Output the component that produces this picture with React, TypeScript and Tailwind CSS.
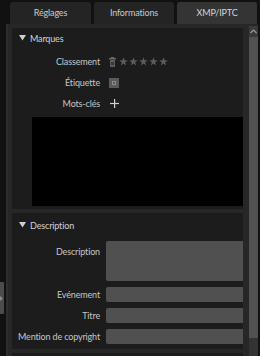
import React from "react";

const Star = () => (
  <svg width="9" height="9" viewBox="0 0 10 10" className="block">
    <polygon
      points="5,0.4 6.2,3.7 9.7,3.8 6.9,5.9 7.9,9.4 5,7.3 2.1,9.4 3.1,5.9 0.3,3.8 3.8,3.7"
      fill="#5c5c5c"
    />
  </svg>
);

const Trash = () => (
  <svg width="7" height="10" viewBox="0 0 7 10" className="block">
    <rect x="2" y="0" width="3" height="1" fill="#6a6a6a" />
    <rect x="0" y="1" width="7" height="1.5" fill="#6a6a6a" />
    <rect x="1" y="3" width="5" height="7" fill="#5c5c5c" />
    <rect x="2" y="5" width="3" height="3" fill="#3a3a3a" />
  </svg>
);

const Caret = () => (
  <svg width="7" height="6" viewBox="0 0 7 6" className="block">
    <polygon points="0,0 7,0 3.5,5.5" fill="#cfcfcf" />
  </svg>
);

function Row({ label, children, h = 21 }: { label: string; children?: React.ReactNode; h?: number }) {
  return (
    <div className="flex items-center" style={{ height: h }}>
      <div className="w-[88px] text-right text-[#c6c6c6] leading-none">{label}</div>
      <div className="ml-[9px] flex items-center">{children}</div>
    </div>
  );
}

function Field({ label, h = 15, top = false }: { label: string; h?: number; top?: boolean }) {
  return (
    <div className={`flex ${top ? "items-start" : "items-center"}`}>
      <div className={`w-[88px] text-right text-[#c6c6c6] leading-none ${top ? "pt-[6px]" : ""}`}>{label}</div>
      <div className="ml-[6px] flex-1 bg-[#505050] rounded-l-[2px]" style={{ height: h }} />
    </div>
  );
}

export default function App() {
  return (
    <div
      className="w-[260px] h-[356px] bg-[#111111] overflow-hidden relative text-[9px] tracking-[-0.15px]"
      style={{ fontFamily: 'Lato, "Noto Sans", "Liberation Sans", sans-serif' }}
    >
      <div className="flex gap-[3px] pl-[10px] pt-[2px] h-[24px]">
        <div className="w-[81px] h-[22px] bg-[#242424] rounded-t-[3px] flex items-center justify-center text-[#c9c9c9]">Réglages</div>
        <div className="w-[80px] h-[22px] bg-[#242424] rounded-t-[3px] flex items-center justify-center text-[#c9c9c9]">Informations</div>
        <div className="w-[80px] h-[22px] bg-[#343434] rounded-t-[3px] flex items-center justify-center text-[#d4d4d4]">XMP/IPTC</div>
      </div>
      <div className="flex h-[332px]">
        <div className="w-[6px] relative">
          <div className="absolute left-0 top-[258px] w-[4px] h-[32px] bg-[#4c4c4c] rounded-r-[1px] flex items-center">
            <svg width="3" height="5" viewBox="0 0 3 5" className="block">
              <polygon points="0,0 3,2.5 0,5" fill="#8a8a8a" />
            </svg>
          </div>
        </div>
        <div className="flex-1 flex border-l-2 border-[#2e2e2e] bg-[#272727]">
          <div className="flex-1 flex flex-col gap-[4px] pt-[4px] pl-[4px]">
            <div className="bg-[#1c1c1c] flex flex-col h-[181px]">
              <div className="flex items-center h-[20px] pl-[7px] gap-[4px] text-[#d2d2d2]">
                <Caret />
                <span className="leading-none">Marques</span>
              </div>
              <div className="flex flex-col pt-[3px]">
                <Row label="Classement">
                  <Trash />
                  <div className="flex gap-[1px] ml-[3px]">
                    <Star /><Star /><Star /><Star /><Star />
                  </div>
                </Row>
                <Row label="Étiquette">
                  <div className="w-[10px] h-[10px] bg-[#5a5a5a] flex items-center justify-center">
                    <div className="w-[4px] h-[4px] border border-[#8a8a8a]" />
                  </div>
                </Row>
                <Row label="Mots-clés" h={20}>
                  <svg width="9" height="9" viewBox="0 0 9 9" className="block ml-[1px]">
                    <rect x="4" y="0" width="1.2" height="9" fill="#cfcfcf" />
                    <rect x="0" y="3.9" width="9" height="1.2" fill="#cfcfcf" />
                  </svg>
                </Row>
              </div>
              <div className="ml-[20px] mt-[4px] h-[89px] bg-black" />
            </div>
            <div className="bg-[#1c1c1c] flex flex-col h-[136px]">
              <div className="flex items-center h-[24px] pl-[7px] gap-[4px] text-[#d2d2d2]">
                <Caret />
                <span className="leading-none">Description</span>
              </div>
              <div className="flex flex-col gap-[6px] mt-[4px]">
                <Field label="Description" h={40} top />
                <Field label="Evénement" />
                <Field label="Titre" />
                <Field label="Mention de copyright" />
              </div>
            </div>
            <div className="bg-[#1c1c1c] flex-1" />
          </div>
          <div className="w-[6px]" />
          <div className="w-[9px] flex flex-col pt-[2px]">
            <div className="h-[11px] bg-[#3a3a3a] flex items-center justify-center">
              <svg width="7" height="5" viewBox="0 0 7 5" className="block">
                <polyline points="0.5,4 3.5,1 6.5,4" fill="none" stroke="#9a9a9a" strokeWidth="1.2" />
              </svg>
            </div>
            <div className="h-[301px] bg-[#515151]" />
            <div className="flex-1 bg-[#333333]" />
          </div>
        </div>
        <div className="w-[2px]" />
      </div>
    </div>
  );
}
